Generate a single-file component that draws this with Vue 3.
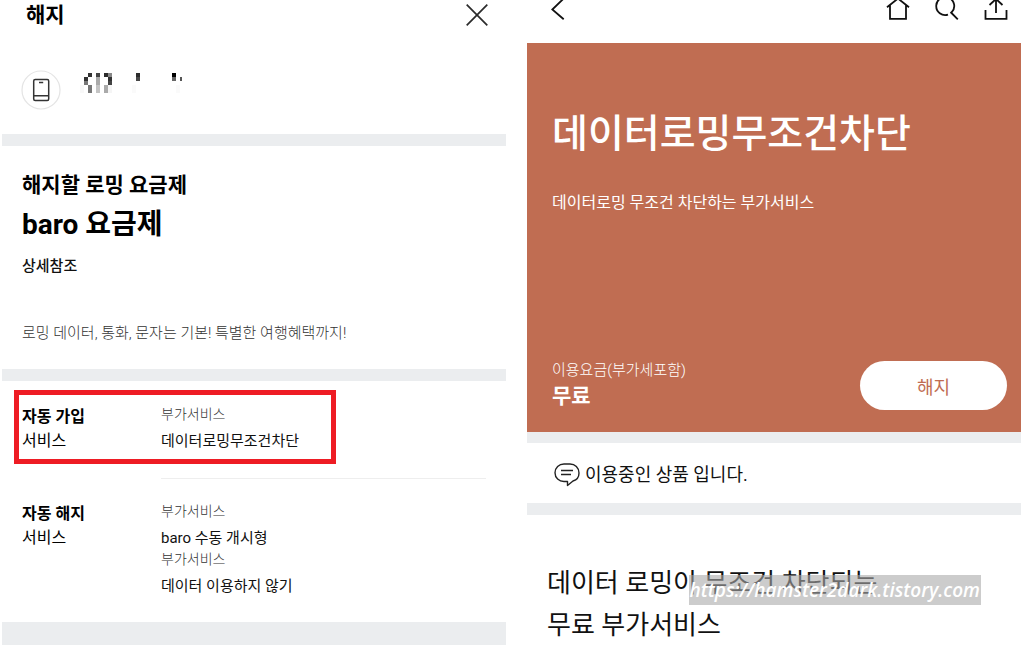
<script setup>
const maskCells = [
  [8, 0, '#333'], [16, 0, '#444'], [24, 0, '#2c2c2c'], [28, 0, '#888'],
  [4, 4, '#333'], [16, 4, '#aaa'], [28, 4, '#333'],
  [4, 8, '#777'], [16, 8, '#aaa'], [28, 8, '#444'],
  [8, 12, '#777'], [16, 12, '#c4c4c4'], [24, 12, '#aaa'],
  [8, 16, '#777'], [16, 16, '#c4c4c4'], [24, 16, '#aaa'],
  [0, 12, '#f8f8f8'], [0, 16, '#f8f8f8'], [28, 12, '#f5f5f5'], [28, 16, '#f5f5f5'],
  [56, 0, '#2c2c2c'], [56, 4, '#484848'], [52, 12, '#fafafa'], [52, 16, '#fafafa'],
  [92, 0, '#000'], [92, 4, '#666'], [96, 12, '#fafafa'], [96, 16, '#fafafa'],
]

const groups = [
  {
    title: '자동 가입',
    marked: true,
    items: ['데이터로밍무조건차단'],
  },
  {
    title: '자동 해지',
    marked: false,
    items: ['baro 수동 개시형', '데이터 이용하지 않기'],
  },
]
</script>

<template>
  <main class="page">
    <section class="panel">
      <header class="head">
        <h1>해지</h1>
        <button class="icon-button" type="button" aria-label="닫기">
          <svg width="22" height="22" viewBox="0 0 22 22" fill="none" stroke="#2b2b2b" stroke-width="1.7">
            <path d="M.7.7l20.600 20.600M21.300.7L.7 21.300" />
          </svg>
        </button>
      </header>

      <div class="line">
        <svg width="40" height="40" viewBox="0 0 40 40" fill="none" stroke="#333" stroke-width="1.500">
          <circle cx="20" cy="20" r="19" stroke="#e4e4e4" stroke-width="1.200" />
          <rect x="12.700" y="9.500" width="15" height="21" rx="1.500" />
          <path d="M12.700 25.700h15M18 12.500h4.200" />
        </svg>
        <svg class="mask" width="104" height="20" viewBox="0 0 104 20" shape-rendering="crispEdges">
          <rect v-for="([x, y, c], i) in maskCells" :key="i" :x="x" :y="y" width="4" height="4" :fill="c" />
          <rect x="100" y="4" width="2" height="4" fill="#555" />
        </svg>
      </div>

      <div class="plan">
        <h2>해지할 로밍 요금제</h2>
        <p class="plan-name">baro 요금제</p>
        <p class="plan-price">상세참조</p>
        <p class="plan-note">로밍 데이터, 통화, 문자는 기본! 특별한 여행혜택까지!</p>
      </div>

      <div class="groups">
        <div v-for="g in groups" :key="g.title" class="group" :class="{ marked: g.marked }">
          <h3>{{ g.title }}<span>서비스</span></h3>
          <dl>
            <template v-for="item in g.items" :key="item">
              <dt>부가서비스</dt>
              <dd>{{ item }}</dd>
            </template>
          </dl>
        </div>
      </div>
      <div class="foot"></div>
    </section>

    <section class="panel">
      <nav class="bar">
        <button class="icon-button back" type="button" aria-label="뒤로">
          <svg width="14" height="22" viewBox="0 0 14 22" fill="none" stroke="#111" stroke-width="1.800">
            <path d="M12.700-1.500L1.300 9.500l11.400 9.800" />
          </svg>
        </button>
        <button class="icon-button" type="button" aria-label="홈">
          <svg width="24" height="22" viewBox="0 0 24 22" fill="none" stroke="#111" stroke-width="1.800">
            <path d="M1 7.300L12-1.500l11 8.800M4 5.500v13.300h16V5.500" />
          </svg>
        </button>
        <button class="icon-button" type="button" aria-label="검색">
          <svg width="24" height="22" viewBox="0 0 24 22" fill="none" stroke="#111" stroke-width="1.800">
            <path d="M13 14.600A9 9 0 1 1 16.600 12.400M15.500 12l7.300 7.400" />
          </svg>
        </button>
        <button class="icon-button" type="button" aria-label="공유">
          <svg width="24" height="22" viewBox="0 0 24 22" fill="none" stroke="#111" stroke-width="1.800">
            <path d="M1.500 10v8.800h21V10M12 13V-1M5.500 5L12-1l6.500 6" />
          </svg>
        </button>
      </nav>

      <div class="hero">
        <h1>데이터로밍무조건차단</h1>
        <p class="hero-sub">데이터로밍 무조건 차단하는 부가서비스</p>
        <div class="fee">
          <p>이용요금(부가세포함)<strong>무료</strong></p>
          <button class="pill" type="button">해지</button>
        </div>
      </div>

      <div class="status">
        <svg width="26" height="24" viewBox="0 0 26 24" fill="none" stroke="#222" stroke-width="1.400" stroke-linejoin="round">
          <path d="M13.500 18.500v4l5.500-4.500C22.500 17 25 14 25 10c0-5.500-4-9-9-9h-6C5 1 1 4.500 1 9.800c0 5.200 4 8.700 9 8.700z" />
          <path d="M7 7.500h12M7 11.500h10" />
        </svg>
        <span>이용중인 상품 입니다.</span>
      </div>

      <div class="about">
        <h2>데이터 로밍이 무조건 차단되는<br />무료 부가서비스</h2>
        <span class="watermark">https://hamster2dark.tistory.com</span>
      </div>
    </section>
  </main>
</template>

<style>
body {
  margin: 0;
  background: #fff;
}
</style>

<style scoped>
.page {
  display: grid;
  grid-template-columns: 504fr 494fr;
  column-gap: 21px;
  padding-left: 2px;
  font-family: Roboto, "Noto Sans CJK KR", sans-serif;
  color: #111;
}
h1, h2, h3, p, dl, dd {
  margin: 0;
}
.panel {
  min-width: 0;
}
.icon-button {
  display: block;
  padding: 0;
  border: 0;
  background: none;
}
.icon-button svg {
  display: block;
}
.head {
  display: flex;
  justify-content: space-between;
  align-items: center;
  height: 30px;
  padding: 0 18px 0 24px;
}
.head h1 {
  font-size: 21px;
  line-height: 30px;
  color: #000;
}
.line {
  display: flex;
  align-items: flex-start;
  gap: 19px;
  padding: 40px 19px 24px;
}
.mask {
  margin-top: 3px;
}
.plan {
  padding: 23px 20px 23px;
  border-top: 12px solid #ebedef;
  border-bottom: 12px solid #ebedef;
}
.plan h2 {
  font-size: 21px;
  line-height: 32px;
  color: #000;
}
.plan-name {
  font-size: 28px;
  line-height: 48px;
  font-weight: 700;
  color: #000;
}
.plan-price {
  font-size: 15px;
  line-height: 34px;
  font-weight: 500;
}
.plan-note {
  margin-top: 37px;
  font-size: 15px;
  line-height: 26px;
  font-weight: 300;
  color: #333;
}
.groups {
  padding: 9px 20px 24px 12px;
}
.group {
  position: relative;
  display: grid;
  grid-template-columns: 139px 1fr;
  padding: 15px 0 0 8px;
}
.group + .group {
  padding-top: 23px;
}
.group h3 {
  font-size: 16px;
  line-height: 24px;
  color: #000;
}
.group h3 span {
  display: block;
  font-weight: 400;
}
.group dl {
  font-size: 15px;
  line-height: 24px;
}
.group.marked dl {
  padding-bottom: 25px;
  border-bottom: 1px solid #eee;
}
.group dt {
  font-size: 14px;
  line-height: 18px;
  font-weight: 300;
  color: #333;
}
.group dd {
  padding-top: 6px;
}
.marked::after {
  content: "";
  position: absolute;
  inset: 0 auto 15px 0;
  width: 312px;
  border: 5px solid #ee1c24;
}
.foot {
  height: 23px;
  background: #ebedef;
}
.bar {
  display: flex;
  align-items: flex-start;
  gap: 25px;
  height: 43px;
  padding: 0 13px 0 24px;
}
.back {
  margin-right: auto;
}
.hero {
  padding: 59px 14px 22px 25px;
  background: #c06d52;
  color: #fff;
}
.hero h1 {
  font-size: 39px;
  line-height: 64px;
  font-weight: 500;
}
.hero-sub {
  margin-top: 25px;
  font-size: 16px;
  line-height: 24px;
}
.fee {
  display: flex;
  justify-content: space-between;
  align-items: flex-end;
  margin-top: 143px;
}
.fee p {
  font-size: 15px;
  line-height: 24px;
  font-weight: 300;
}
.fee strong {
  display: block;
  font-size: 21px;
  line-height: 28px;
  font-weight: 700;
}
.pill {
  width: 147px;
  height: 49px;
  border: 0;
  border-radius: 25px;
  background: #fff;
  color: #c06d52;
  font: inherit;
  font-size: 18px;
}
.status {
  display: flex;
  align-items: center;
  gap: 5px;
  height: 60px;
  padding-left: 27px;
  border-top: 11px solid #ebedef;
  border-bottom: 12px solid #ebedef;
  font-size: 18px;
}
.status svg {
  margin-top: 4px;
}
.about {
  position: relative;
  padding: 47px 20px 0;
}
.about h2 {
  font-size: 26px;
  line-height: 42px;
  font-weight: 400;
  white-space: nowrap;
}
.watermark {
  position: absolute;
  top: 60px;
  right: 40px;
  padding: 0 1px;
  background: rgba(170, 170, 170, 0.6);
  color: #fff;
  font: italic 600 19px/30px "Open Sans", sans-serif;
}
</style>
